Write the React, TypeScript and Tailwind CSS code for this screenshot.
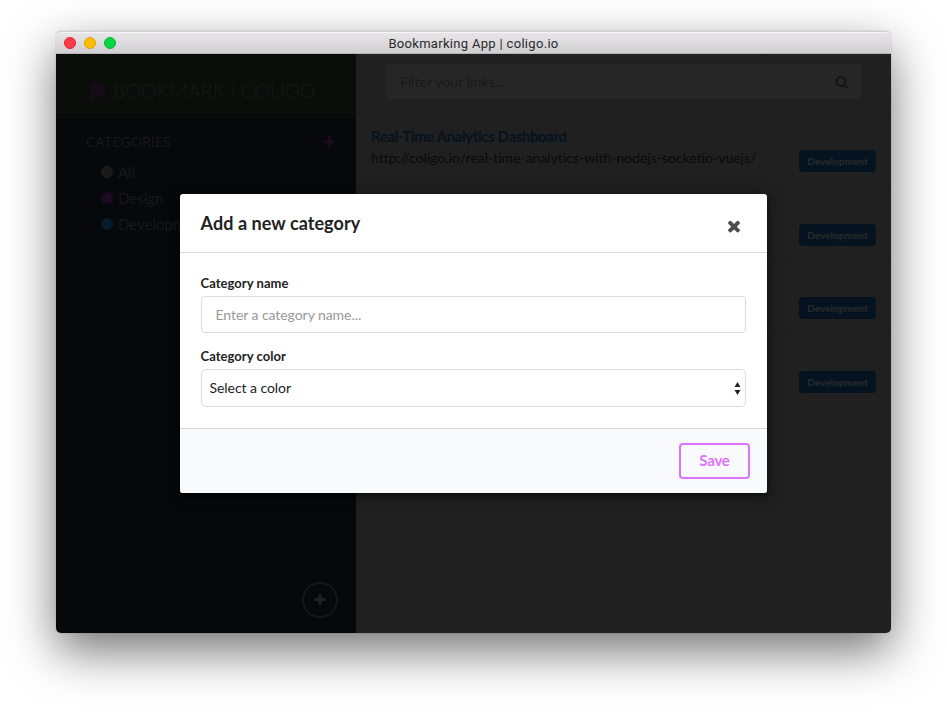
import React from "react";

const PATHS = {
  close:
    "M1490 1322q0 40-28 68l-136 136q-28 28-68 28t-68-28l-294-294-294 294q-28 28-68 28t-68-28l-136-136q-28-28-28-68t28-68l294-294-294-294q-28-28-28-68t28-68l136-136q28-28 68-28t68 28l294 294 294-294q28-28 68-28t68 28l136 136q28 28 28 68t-28 68l-294 294 294 294q28 28 28 68z",
  plus:
    "M1600 736v192q0 40-28 68t-68 28h-416v416q0 40-28 68t-68 28h-192q-40 0-68-28t-28-68v-416h-416q-40 0-68-28t-28-68v-192q0-40 28-68t68-28h416v-416q0-40 28-68t68-28h192q40 0 68 28t28 68v416h416q40 0 68 28t28 68z",
  search:
    "M1216 832q0-185-131.5-316.5t-316.5-131.5-316.5 131.5-131.5 316.5 131.5 316.5 316.5 131.5 316.5-131.5 131.5-316.5zm512 832q0 52-38 90t-90 38q-54 0-90-38l-343-342q-179 124-399 124-143 0-273.5-55.5t-225-150-150-225-55.5-273.5 55.5-273.5 150-225 225-150 273.5-55.5 273.5 55.5 225 150 150 225 55.5 273.5q0 220-124 399l343 343q37 37 37 90z",
};

function Icon({ name, className }: { name: keyof typeof PATHS; className: string }) {
  return (
    <svg viewBox="0 0 1792 1792" className={className} fill="currentColor">
      <path d={PATHS[name]} />
    </svg>
  );
}

function TitleBar() {
  return (
    <div className="relative flex h-[23px] shrink-0 items-center justify-center rounded-t-[5px] border-t border-b border-t-[#d0d2d0] border-b-[#b4b6b4] bg-linear-to-b from-[#e8e6e8] to-[#d2cfd2] shadow-[inset_0_1px_0_#f6f5f6]">
      <div className="absolute left-2 flex gap-2 pt-px">
        <span className="size-3 rounded-full border border-[#e8222f] bg-[#ff3b47]" />
        <span className="size-3 rounded-full border border-[#e5a10f] bg-[#ffbd00]" />
        <span className="size-3 rounded-full border border-[#10b530] bg-[#00d742]" />
      </div>
      <span className="pt-[3px] font-[Roboto,sans-serif] text-[13px] tracking-[0.31px] text-[#2b2a2c]">
        Bookmarking App | coligo.io
      </span>
    </div>
  );
}

const categories = [
  { name: "All", dot: "bg-[#1a1a1a]" },
  { name: "Design", dot: "bg-[#1c0a21]" },
  { name: "Development", dot: "bg-[#071a2a]" },
];

function Sidebar() {
  return (
    <aside className="flex w-[300px] shrink-0 flex-col bg-[#07080a] text-[#171818]">
      <div className="flex h-[60px] items-center bg-[#0b0d0b] pt-3 pl-[35px]">
        <svg viewBox="0 0 14 17" className="mt-0.5 h-[17px] w-[14px] text-[#160b19]" fill="currentColor">
          <path d="M1.3 0h11.4Q14 0 14 1.3V17H12.8L7 11.8 1.2 17H0V1.3Q0 0 1.3 0Z" />
        </svg>
        <h1 className="ml-2 text-[20px] leading-6 font-light tracking-[-0.08px] whitespace-nowrap">
          BOOKMARK | COLIGO
        </h1>
      </div>
      <div className="mt-[18px] flex h-5 items-center justify-between pr-5 pl-[30px]">
        <h2 className="text-sm tracking-[0.1px]">CATEGORIES</h2>
        <Icon name="plus" className="size-3.5 text-[#1a0c1d]" />
      </div>
      <ul className="mt-[7px] pl-[45px]">
        {categories.map((c) => (
          <li key={c.name} className="flex h-[26px] items-center gap-[5px] text-[15px]">
            <span className={`size-3 rounded-full ${c.dot}`} />
            {c.name}
          </li>
        ))}
      </ul>
      <div className="mt-auto mr-[18px] mb-[15px] flex size-9 items-center justify-center self-end rounded-full border-2 border-[#151616] text-[#202021]">
        <Icon name="plus" className="size-3.5" />
      </div>
    </aside>
  );
}

const links = [
  { title: "Real-Time Analytics Dashboard", url: "http://coligo.io/real-time-analytics-with-nodejs-socketio-vuejs/" },
  {},
  {},
  {},
] as { title?: string; url?: string }[];

function Links() {
  return (
    <main className="flex grow flex-col bg-[#202020]">
      <div className="flex h-[60px] items-start border-b border-[#1c1c1c] pt-2.5 pr-[30px] pl-[30px]">
        <div className="flex h-[35px] grow items-center justify-between rounded-[4px] bg-[#262626] pr-3 pl-3.5 text-[#191919]">
          <span className="text-sm tracking-[0.05px]">Filter your links...</span>
          <Icon name="search" className="size-3.5 text-[#151515]" />
        </div>
      </div>
      {links.map((link, i) => (
        <div
          key={i}
          className="flex h-[73.7px] justify-between border-b border-[#1c1c1c] pr-[15px] pl-[15px] last:border-b-0"
        >
          <div className="pt-3">
            <div className="text-[15px] leading-5 font-bold tracking-[-0.4px] text-[#06121d]">{link.title}</div>
            <div className="pt-0.5 text-sm leading-5 tracking-[-0.01px] text-[#0a0a0a]">{link.url}</div>
          </div>
          <span className="mt-9 flex h-[22px] w-[77px] items-center justify-center rounded-[4px] bg-[#04131f] pt-px text-[10px] font-black text-[#24292c]">
            Development
          </span>
        </div>
      ))}
    </main>
  );
}

function CategoryModal() {
  return (
    <div className="absolute top-[163px] left-[124px] flex h-[299px] w-[587px] flex-col overflow-hidden rounded-[3px] bg-white text-[#222] shadow-[1px_3px_3px_0_rgba(0,0,0,0.3),1px_3px_15px_2px_rgba(0,0,0,0.35)]">
      <div className="flex h-[59px] shrink-0 items-center justify-between border-b border-[#dcdcdc] pr-6 pl-[20.5px]">
        <h3 className="text-[18px] leading-6 font-bold tracking-[0.07px]">Add a new category</h3>
        <Icon name="close" className="mt-[5px] size-[18px] text-[#4d4d4d]" />
      </div>
      <div className="flex flex-col px-[21px] pt-5">
        <label className="-ml-[0.5px] text-[13px] leading-5 font-bold tracking-[0.05px]">Category name</label>
        <div className="mt-[3px] flex h-[37px] items-center rounded-[4px] border border-[#dcdcdc] px-[13.5px] text-sm tracking-[-0.06px] text-[#999]">
          Enter a category name...
        </div>
        <label className="mt-[13px] -ml-[0.5px] text-[13px] leading-5 font-bold tracking-[0.05px]">Category color</label>
        <div className="mt-[3px] flex h-[38px] items-center justify-between rounded-[5px] border border-[#dcdcdc] pr-1 pl-[7.5px] text-sm tracking-[-0.06px]">
          Select a color
          <svg viewBox="0 0 7 13" className="h-[13px] w-[7px]" fill="#222">
            <path d="M3.5 0 6.5 5h-6ZM3.5 13 .5 8h6Z" />
          </svg>
        </div>
      </div>
      <div className="mt-auto flex h-[65px] items-center justify-end border-t border-[#d6d7d8] bg-[#f9fafb] pr-[17px]">
        <button className="h-9 w-[71px] rounded-[4px] border-2 border-[#dc73ff] pb-0.5 text-[15px] leading-4 font-bold tracking-[-0.25px] text-[#dc73ff]">
          Save
        </button>
      </div>
    </div>
  );
}

export default function App() {
  return (
    <div className="flex h-[713px] w-[947px] overflow-hidden bg-white px-14 pt-[31px] font-[Lato,sans-serif]">
      <div className="relative flex h-[602px] w-[835px] flex-col rounded-[5px] shadow-[0_0_1px_rgba(0,0,0,0.5),0_18px_48px_rgba(0,0,0,0.55)]">
        <TitleBar />
        <div className="flex grow overflow-hidden rounded-b-[5px]">
          <Sidebar />
          <Links />
        </div>
        <CategoryModal />
      </div>
    </div>
  );
}
